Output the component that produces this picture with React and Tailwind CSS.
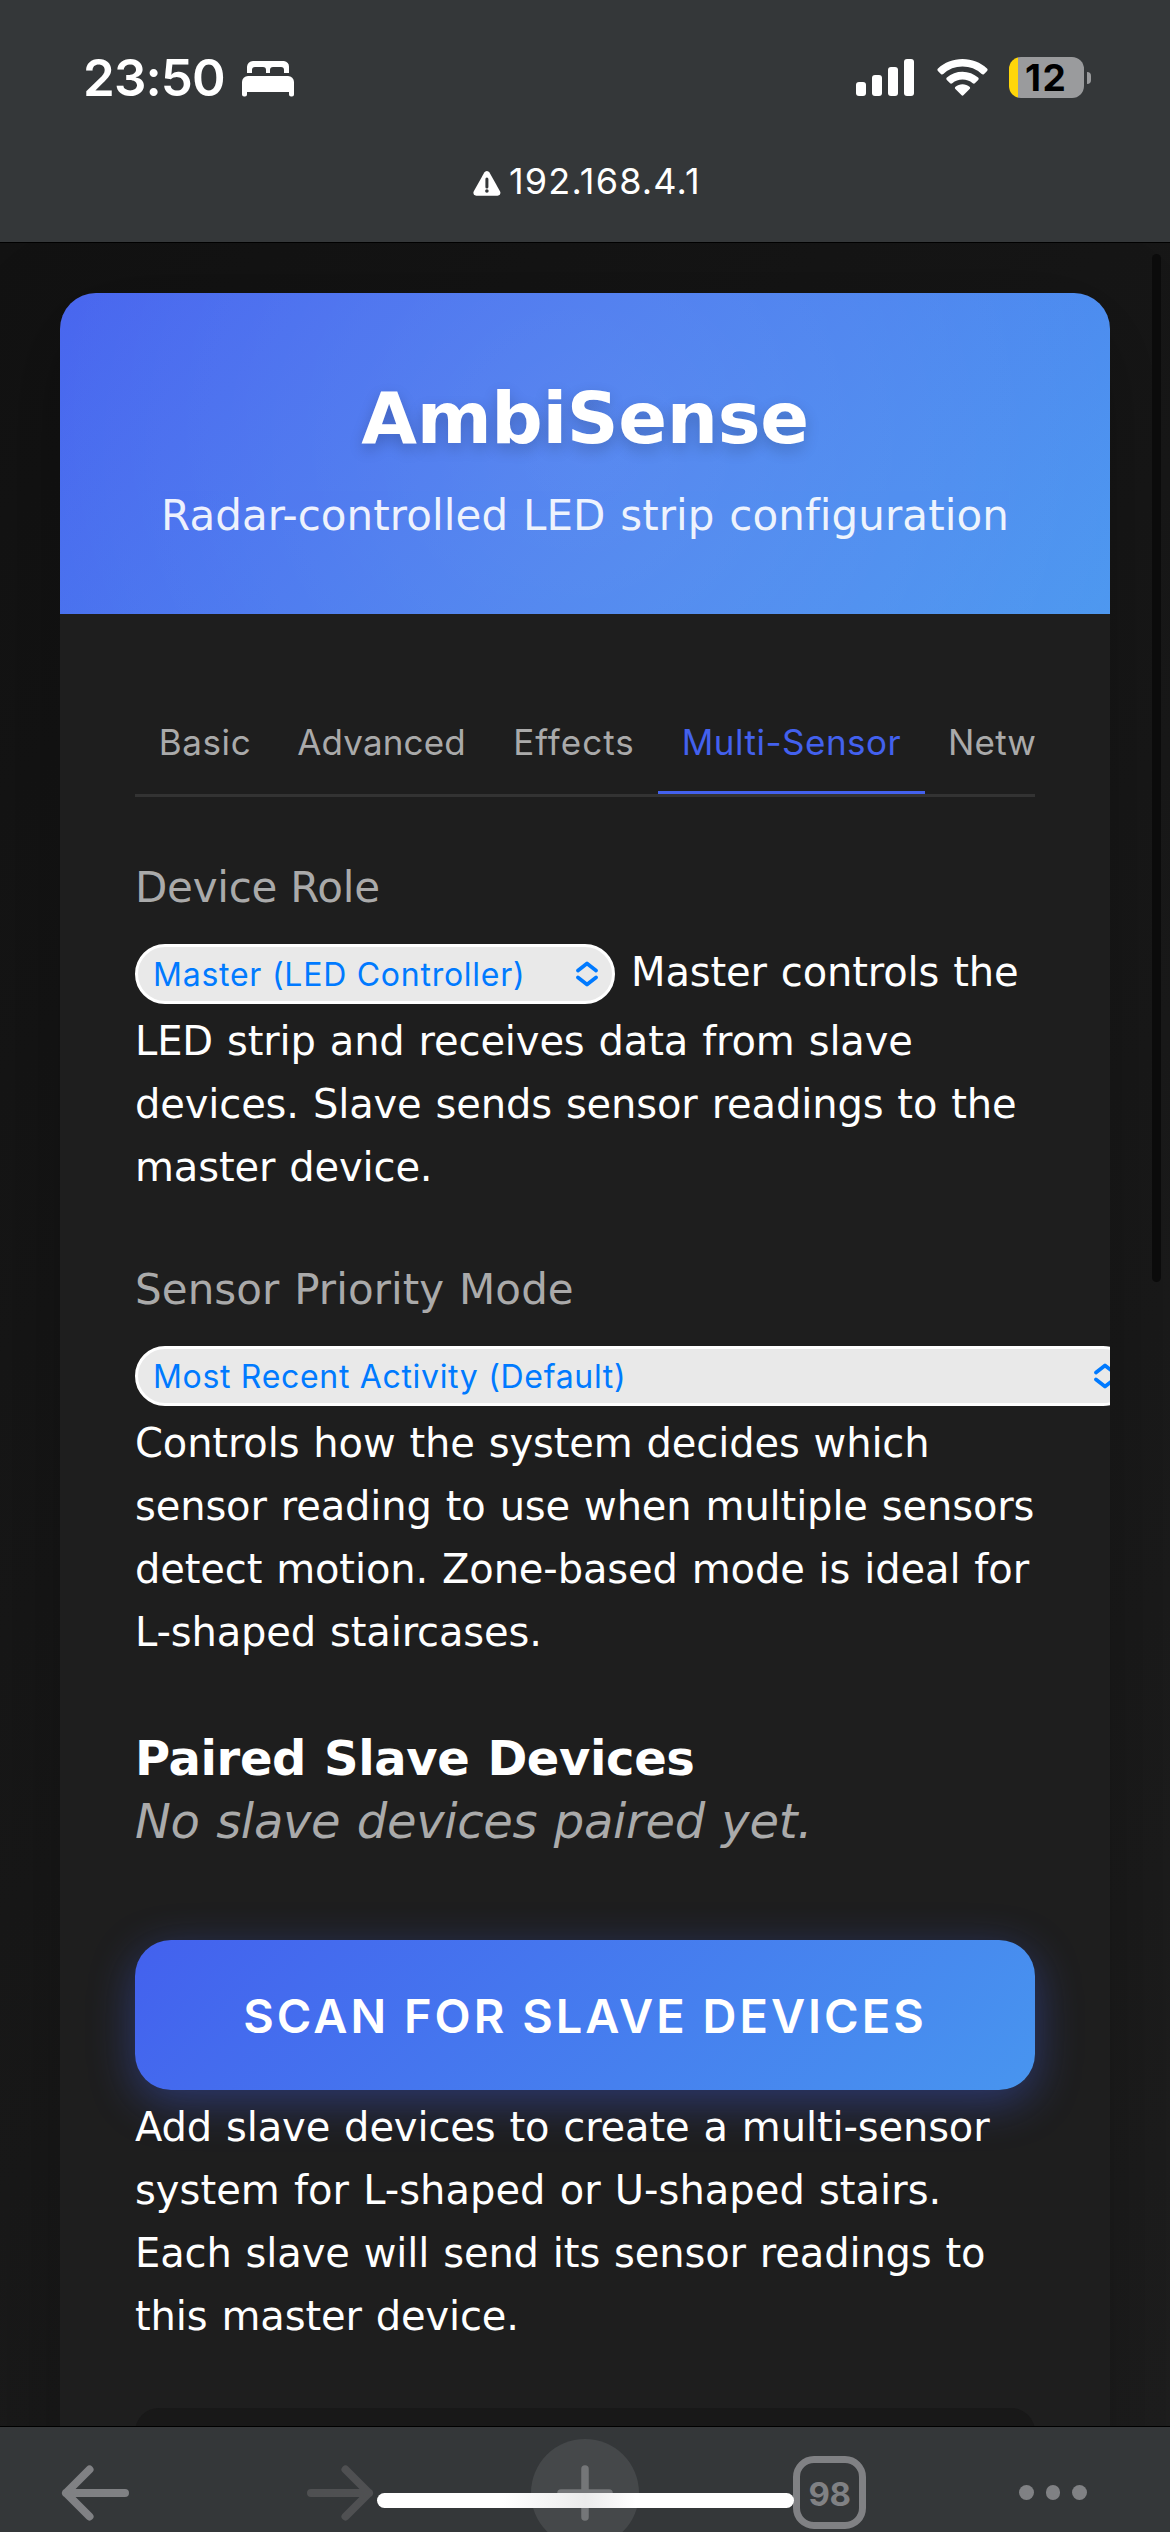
import React from "react";

const BODY = "text-[40px] leading-[63px] tracking-[-0.13px] [word-spacing:1.4px] whitespace-nowrap";
const LABEL = "text-[42px] leading-[63px] text-[#aaaaaa]";

function BedIcon() {
  return (
    <svg width="53" height="37" viewBox="0 0 53 37" fill="#fff">
      <path d="M5 12V6a6 6 0 0 1 6-6h31a6 6 0 0 1 5 6v6h-5V9a3 3 0 0 0-3-3H31a3 3 0 0 0-3 3v3h-4V9a3 3 0 0 0-3-3h-8a3 3 0 0 0-3 3v3Z" />
      <path d="M0 21a6 6 0 0 1 6-6h40a6 6 0 0 1 6 6v12.500a2 2 0 0 1-2 2h-1a2 2 0 0 1-2-2V31H5v2.500a2 2 0 0 1-2 2H2a2 2 0 0 1-2-2Z" />
    </svg>
  );
}

function SignalIcon() {
  return (
    <svg width="58" height="37" viewBox="0 0 58 37" fill="#fff">
      <rect x="0" y="23" width="10" height="14" rx="3" />
      <rect x="16" y="16" width="10" height="21" rx="3" />
      <rect x="32" y="8" width="10" height="29" rx="3" />
      <rect x="48" y="0" width="10" height="37" rx="3" />
    </svg>
  );
}

function WifiIcon() {
  return (
    <svg width="51" height="37" viewBox="0 0 51 37" fill="#fff">
      <path d="M25.500 0C35 0 43.500 3.500 50 9.400c.8.700.8 1.700.1 2.500l-3 3c-.7.700-1.600.7-2.400.1A28.500 28.500 0 0 0 25.500 7.600 28.500 28.500 0 0 0 6.300 15c-.8.600-1.700.6-2.400-.1l-3-3c-.7-.8-.7-1.800.1-2.500C7.500 3.500 16 0 25.500 0Z" />
      <path d="M25.500 12.700c6 0 11.400 2.200 15.600 5.900.8.700.8 1.700.1 2.400l-3.100 3.100c-.7.700-1.600.7-2.400.1a15.800 15.800 0 0 0-20.400 0c-.8.600-1.700.6-2.400-.1L9.800 21c-.7-.7-.7-1.700.1-2.400a23.500 23.500 0 0 1 15.600-5.900Z" />
      <path d="M25.500 25.300c2.700 0 5.100.9 7 2.400.8.700.8 1.600.1 2.400l-6 6c-.7.700-1.500.7-2.200 0l-6-6c-.7-.8-.7-1.700.1-2.400 1.900-1.500 4.300-2.400 7-2.400Z" />
    </svg>
  );
}

function Battery() {
  return (
    <div className="flex items-center">
      <div className="flex h-[41px] w-[75px] items-center rounded-[12px] bg-[#9a9b9d] bg-[linear-gradient(90deg,#ffd60a_9.500px,transparent_9.500px)] pl-[16px]">
        <span className="text-[37px] leading-[41px] font-bold tracking-[1.500px] text-black">12</span>
      </div>
      <div className="ml-[3px] h-[12px] w-[4px] rounded-r-full bg-[#9a9b9d]" />
    </div>
  );
}

function Header() {
  return (
    <header className="h-[243px] border-b border-black bg-[#343739] font-[Inter,sans-serif] text-white">
      <div className="flex h-[157px] items-start pt-[48px] pl-[83px]">
        <div className="w-[159px] text-[51px] leading-[60px] font-semibold tracking-[-0.900px]">23:50</div>
        <div className="mt-[13px]"><BedIcon /></div>
        <div className="mt-[11px] ml-[561px]"><SignalIcon /></div>
        <div className="mt-[11px] ml-[22.500px]"><WifiIcon /></div>
        <div className="mt-[9px] ml-[21.500px]"><Battery /></div>
      </div>
      <div className="flex items-start pl-[473px]">
        <svg className="mt-[14px]" width="28" height="25" viewBox="0 0 28 25">
          <path d="M11.300 1.600a3 3 0 0 1 5.200 0l10.600 18.900a3 3 0 0 1-2.600 4.300H3.300a3 3 0 0 1-2.600-4.300Z" fill="#fff" />
          <path d="M13.900 8v8" stroke="#343739" strokeWidth="3" strokeLinecap="round" />
          <circle cx="13.900" cy="20" r="1.800" fill="#343739" />
        </svg>
        <span className="ml-[8px] text-[36px] leading-[49px] tracking-[1.170px]">192.168.4.1</span>
      </div>
    </header>
  );
}

function Tabs() {
  const base = "shrink-0 border-b-[3px] pb-[28px] text-center text-[35px] leading-[42px]";
  const idle = "border-transparent text-[#aaaaaa]";
  return (
    <nav className="flex overflow-hidden border-b-[3px] border-[#333333] font-[Inter,sans-serif]">
      <div className={`${base} ${idle} w-[140px] tracking-[0.600px]`}>Basic</div>
      <div className={`${base} ${idle} w-[213px] tracking-[0.150px]`}>Advanced</div>
      <div className={`${base} ${idle} w-[170px] pl-[2px] tracking-[1px]`}>Effects</div>
      <div className={`${base} w-[267px] border-[#4361ee] tracking-[0.500px] text-[#4361ee]`}>Multi-Sensor</div>
      <div className={`${base} ${idle} pl-[23px] tracking-[0.200px]`}>Network</div>
    </nav>
  );
}

function Select({ value, className }) {
  return (
    <div className={`flex h-[60px] shrink-0 items-center justify-between rounded-full border-[3px] border-white bg-[#e9e9e9] pr-[14px] pl-[15px] font-[Inter,sans-serif] text-[#007aff] ${className}`}>
      <span className="pt-[2px] text-[32px] leading-[52px]">{value}</span>
      <svg width="22" height="26" viewBox="0 0 22 26" fill="none" stroke="#007aff" strokeWidth="3.700" strokeLinecap="round" strokeLinejoin="round">
        <path d="M2 9.500 11 2.500l9 7M2 16.500l9 7 9-7" />
      </svg>
    </div>
  );
}

function Card() {
  return (
    <section className="h-[2300px] w-[1050px] shrink-0 overflow-hidden rounded-[36px] bg-[#1e1e1e] shadow-[0_24px_96px_rgba(0,0,0,0.3)]">
      <div className="h-[321px] bg-[radial-gradient(circle,rgba(255,255,255,0.1)_0%,rgba(255,255,255,0.03)_100%),linear-gradient(135deg,#4361ee,#4895ef)] pt-[80px] text-center text-white">
        <h1 className="text-[72px] leading-[90px] font-bold tracking-[-0.350px] [text-shadow:0_6px_15px_rgba(0,0,0,0.2)]">AmbiSense</h1>
        <p className="mt-[21px] text-[42px] leading-[63px] tracking-[0.070px] [word-spacing:1.400px] opacity-90">Radar-controlled LED strip configuration</p>
      </div>
      <div className="px-[75px] pt-[107px] text-white">
        <Tabs />
        <div className={`${LABEL} mt-[59px] tracking-[-0.250px]`}>Device Role</div>
        <div className="mt-[25px] flex h-[66px] items-start">
          <Select value="Master (LED Controller)" className="w-[480px] tracking-[0.750px]" />
          <span className="ml-[16px] text-[40px] leading-[56px] tracking-[-0.130px] [word-spacing:1.400px] whitespace-nowrap">Master controls the</span>
        </div>
        <p className={BODY}>
          LED strip and receives data from slave<br />
          devices. Slave sends sensor readings to the<br />
          master device.
        </p>
        <div className={`${LABEL} mt-[59px] tracking-[0.070px] [word-spacing:1.400px]`}>Sensor Priority Mode</div>
        <Select value="Most Recent Activity (Default)" className="mt-[25px] w-[998px] tracking-[0.680px]" />
        <p className={`${BODY} mt-[6px]`}>
          Controls how the system decides which<br />
          sensor reading to use when multiple sensors<br />
          detect motion. Zone-based mode is ideal for<br />
          L-shaped staircases.
        </p>
        <h2 className="mt-[63px] text-[48px] leading-[63px] font-bold tracking-[-0.370px] [word-spacing:1.600px]">Paired Slave Devices</h2>
        <p className="text-[48px] leading-[63px] tracking-[-0.320px] text-[#aaaaaa] italic [word-spacing:1.600px]">No slave devices paired yet.</p>
        <button className="mt-[87px] flex h-[150px] w-full items-center justify-center rounded-[36px] bg-[linear-gradient(135deg,#4361ee,#4895ef)] pt-[2px] font-[Inter,sans-serif] text-[47px] font-semibold tracking-[3px] shadow-[0_12px_45px_rgba(67,97,238,0.4)]">
          SCAN FOR SLAVE DEVICES
        </button>
        <p className={`${BODY} relative mt-[6px]`}>
          Add slave devices to create a multi-sensor<br />
          <span className="tracking-[0.030px]">system for L-shaped or U-shaped stairs.</span><br />
          Each slave will send its sensor readings to<br />
          this master device.
        </p>
        <div className="mt-[60px] h-[200px] rounded-[24px] bg-[#181818]" />
      </div>
    </section>
  );
}

function Toolbar() {
  return (
    <footer className="relative h-[106px] overflow-hidden border-t border-black bg-[#343739]">
      <div className="flex h-[131px] items-center pl-[61px]">
        <svg width="68" height="56" viewBox="0 0 68 56" fill="none" stroke="#808184" strokeWidth="8" strokeLinecap="round" strokeLinejoin="round">
          <path d="M28.500 4.500 5 28l23.500 23.500M5 28h59" />
        </svg>
        <svg className="ml-[177px]" width="68" height="56" viewBox="0 0 68 56" fill="none" stroke="#4f5052" strokeWidth="8" strokeLinecap="round" strokeLinejoin="round">
          <path d="M39.500 4.500 63 28 39.500 51.500M63 28H5" />
        </svg>
        <div className="ml-[157px] flex h-[108px] w-[108px] items-center justify-center rounded-full bg-[#45484a]">
          <svg width="56" height="56" viewBox="0 0 56 56" stroke="#747678" strokeWidth="7.500" strokeLinecap="round">
            <path d="M28 4v48M4 28h48" />
          </svg>
        </div>
        <div className="ml-[154px] flex h-[73px] w-[73px] items-center justify-center rounded-[21px] border-[7px] border-[#808184] pt-[3px] font-[Inter,sans-serif] text-[33px] leading-none font-bold tracking-[-0.400px] text-[#808184]">
          98
        </div>
        <div className="ml-[153px] flex gap-[12px]">
          <span className="h-[14.500px] w-[14.500px] rounded-full bg-[#808184]" />
          <span className="h-[14.500px] w-[14.500px] rounded-full bg-[#808184]" />
          <span className="h-[14.500px] w-[14.500px] rounded-full bg-[#808184]" />
        </div>
      </div>
      <div className="absolute top-[66px] left-[377px] h-[15px] w-[417px] rounded-full bg-[linear-gradient(90deg,#fff_30%,#ebebeb_50%,#fff_62%)]" />
    </footer>
  );
}

export default function App() {
  return (
    <div className="flex h-[2532px] w-[1170px] flex-col overflow-hidden font-['DejaVu_Sans',sans-serif]">
      <Header />
      <main className="relative flex h-[2183px] items-start justify-center overflow-hidden bg-[linear-gradient(135deg,#121212,#1e1e1e)] pt-[50px]">
        <Card />
        <div className="absolute top-[11px] right-[9px] h-[1028px] w-[9px] rounded-full bg-[#0b0b0b]" />
      </main>
      <Toolbar />
    </div>
  );
}
